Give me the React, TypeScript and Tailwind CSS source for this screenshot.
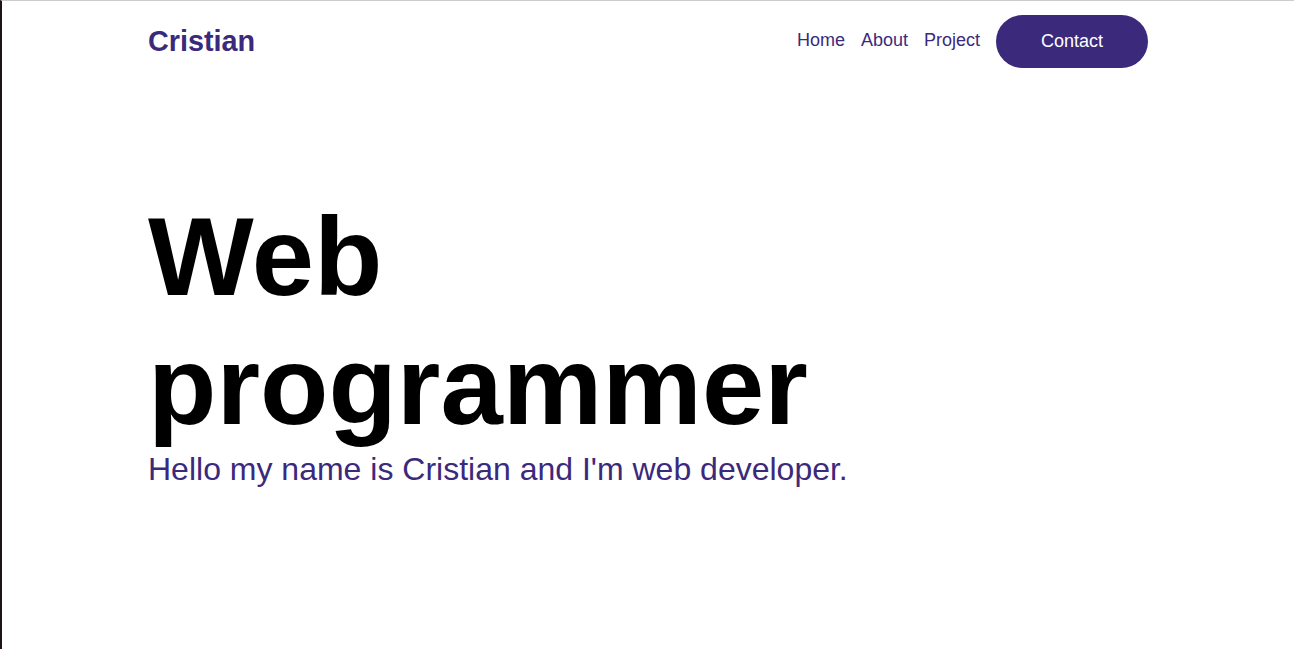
export default function App() {
  return (
    <div
      className="min-h-[649px] bg-white border-l-2 border-l-[#1c1218] border-t border-t-[#cccccc]"
      style={{ fontFamily: '"Liberation Sans", Arial, sans-serif' }}
    >
      <div className="mx-auto w-[1000px]">
        <header className="flex items-center justify-between py-[14px]">
          <a className="text-[28.8px] font-bold text-[#3b2a7b] leading-none">Cristian</a>
          <nav className="flex items-center gap-4 text-[18px] text-[#3b2a7b]">
            <a className="mb-[2px]">Home</a>
            <a className="mb-[2px]">About</a>
            <a className="mb-[2px]">Project</a>
            <button className="h-[53px] w-[152px] rounded-full bg-[#3b2a7b] text-white text-[18px]">
              Contact
            </button>
          </nav>
        </header>
        <section className="mt-[111px]">
          <h1 className="text-[112px] font-bold text-black leading-[1.149]">
            Web
            <br />
            programmer
          </h1>
          <p className="mt-[1px] text-[32px] text-[#3b2a7b] leading-[1.149]">
            Hello my name is Cristian and I'm web developer.
          </p>
        </section>
      </div>
    </div>
  );
}
